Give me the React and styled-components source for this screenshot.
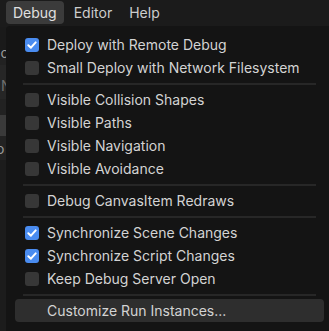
import React from "react";
import styled, { createGlobalStyle } from "styled-components";

const Global = createGlobalStyle`
  html, body { margin: 0; padding: 0; background: #1b1b1b; overflow: hidden; }
  body { font-family: Inter, "Noto Sans", sans-serif; }
`;

const Screen = styled.div`
  position: relative;
  width: 329px;
  height: 331px;
  overflow: hidden;
  background: #1b1b1b;
`;

const MenuBar = styled.div`
  display: flex;
  align-items: center;
  height: 27px;
  padding: 0 0 0 6px;
  box-sizing: border-box;
`;

const MenuButton = styled.div`
  height: 23px;
  margin-top: -2px;
  padding: 0 7px;
  display: flex;
  align-items: center;
  border-radius: 4px;
  font-size: 14px;
  color: ${(p) => (p.$active ? "#e0e0e0" : "#cdcdcd")};
  background: ${(p) => (p.$active ? "#3b3b3b" : "transparent")};
  margin-right: 3px;
`;

const Behind = styled.div`
  display: flex;
  flex-direction: column;
  width: 60px;
`;

const Strip = styled.div`
  height: ${(p) => p.$h}px;
  background: ${(p) => p.$bg};
  color: #9a9a9a;
  font-size: 14px;
  display: flex;
  align-items: center;
  overflow: hidden;
  white-space: nowrap;
`;

const Peek = styled.span`
  margin-left: ${(p) => p.$x}px;
  margin-top: ${(p) => p.$y ?? 0}px;
  color: ${(p) => p.$c ?? "#9a9a9a"};
`;

const Popup = styled.div`
  position: absolute;
  left: 6px;
  top: 26px;
  width: 327px;
  height: 320px;
  background: #141414;
  border-radius: 4px 0 0 0;
  padding: 7px 9px;
  box-sizing: border-box;
  display: flex;
  flex-direction: column;
`;

const Row = styled.div`
  height: 23px;
  display: flex;
  align-items: center;
  gap: 8px;
  padding-left: ${(p) => (p.$plain ? 32 : 10)}px;
  border-radius: 4px;
  font-size: 14px;
  color: #d3d3d3;
  background: ${(p) => (p.$hover ? "#2e2e2e" : "transparent")};
  white-space: nowrap;
  flex-shrink: 0;
`;

const Box = styled.div`
  width: 14px;
  height: 14px;
  border-radius: 3px;
  background: ${(p) => (p.$checked ? "#4a8cf0" : "#373737")};
  display: flex;
  align-items: center;
  justify-content: center;
  flex-shrink: 0;
`;

const Sep = styled.div`
  height: 9px;
  display: flex;
  align-items: center;
  padding: 0 8px;
  flex-shrink: 0;
  &::after {
    content: "";
    flex: 1;
    height: 2px;
    background: #272727;
  }
`;

const Check = () => (
  <svg width="14" height="14" viewBox="0 0 14 14">
    <path d="M3.3 7.3 L5.9 9.7 L10.7 4.4" fill="none" stroke="#fff" strokeWidth="2" strokeLinecap="round" strokeLinejoin="round" />
  </svg>
);

const Item = ({ checked, children }) => (
  <Row>
    <Box $checked={checked}>{checked && <Check />}</Box>
    {children}
  </Row>
);

export default function App() {
  return (
    <Screen>
      <Global />
      <MenuBar>
        <MenuButton $active>Debug</MenuButton>
        <MenuButton>Editor</MenuButton>
        <MenuButton>Help</MenuButton>
      </MenuBar>
      <Behind>
        <Strip $h={31} $bg="#1a1a1a">
          <Peek $x={-8} $y={20}>oc</Peek>
        </Strip>
        <Strip $h={7} $bg="#222222" />
        <Strip $h={34} $bg="#262626">
          <Peek $x={1} $y={6} $c="#6e6e6e">N</Peek>
        </Strip>
        <Strip $h={16} $bg="#222222" />
        <Strip $h={21} $bg="#3a3a3a" />
        <Strip $h={24} $bg="#222222">
          <Peek $x={-4}>o</Peek>
        </Strip>
        <Strip $h={200} $bg="#1c1c1c" />
      </Behind>
      <Popup>
        <Item checked>Deploy with Remote Debug</Item>
        <Item>Small Deploy with Network Filesystem</Item>
        <Sep />
        <Item>Visible Collision Shapes</Item>
        <Item>Visible Paths</Item>
        <Item>Visible Navigation</Item>
        <Item>Visible Avoidance</Item>
        <Sep />
        <Item>Debug CanvasItem Redraws</Item>
        <Sep />
        <Item checked>Synchronize Scene Changes</Item>
        <Item checked>Synchronize Script Changes</Item>
        <Item>Keep Debug Server Open</Item>
        <Sep />
        <Row $plain $hover>Customize Run Instances...</Row>
      </Popup>
    </Screen>
  );
}
